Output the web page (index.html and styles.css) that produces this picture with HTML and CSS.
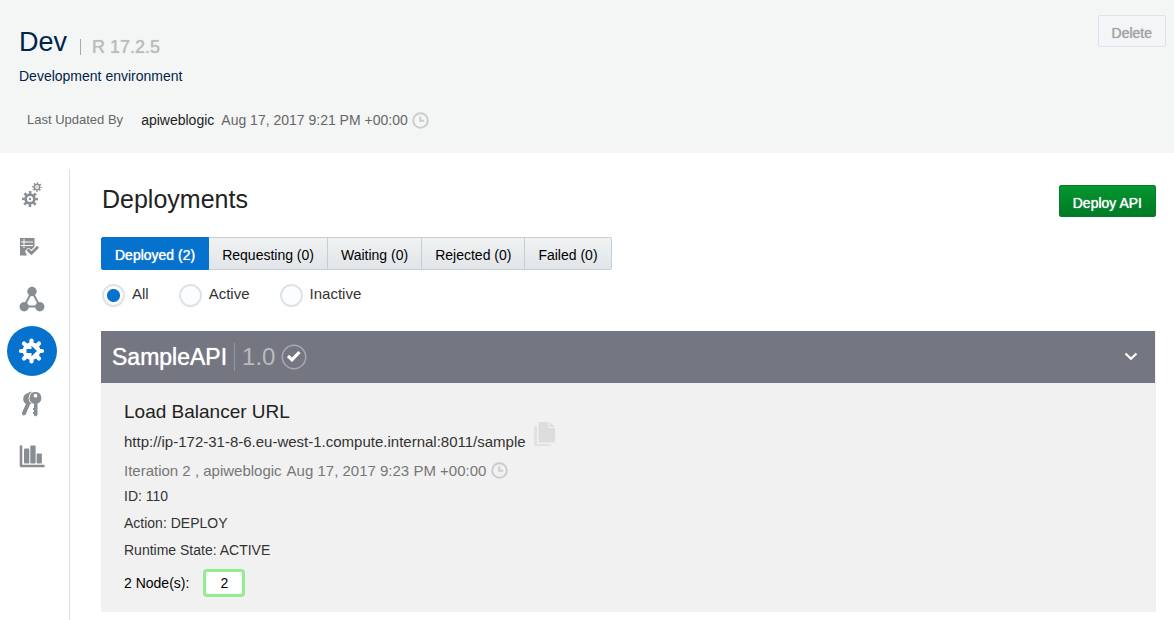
FILE: index.html
```html
<!DOCTYPE html>
<html lang="en">

<head>
    <meta charset="UTF-8">
    <meta name="viewport" content="width=device-width, initial-scale=1.0">
    <title>Dev - Deployments</title>
    <link rel="stylesheet" href="styles.css">
</head>

<body>
    <header class="page-header">
        <div>
            <div class="title-row">
                <h1>Dev</h1>
                <span class="release">R 17.2.5</span>
            </div>
            <p class="description">Development environment</p>
            <div class="updated">
                <span class="updated-label">Last Updated By</span>
                <span class="updated-user">apiweblogic</span>
                <span class="updated-date">Aug 17, 2017 9:21 PM +00:00</span>
                <svg class="clock" viewBox="0 0 17 17"><circle cx="8.5" cy="8.5" r="7.3" /><path d="M8.2 4.5v4.3h4" /></svg>
            </div>
        </div>
        <button class="btn btn-delete" disabled>Delete</button>
    </header>

    <div class="layout">
        <nav class="sidebar">
            <a href="#" aria-label="Settings">
                <svg width="22" height="26" viewBox="0 0 22 26">
                    <g fill="none" stroke="#878d91">
                        <circle cx="9" cy="17" r="4.4" stroke-width="2.8" />
                        <circle cx="9" cy="17" r="6.6" stroke-width="2.8" stroke-dasharray="2.5 2.68" stroke-dashoffset="1.25" />
                        <circle cx="16" cy="5" r="2.6" stroke-width="1.4" />
                        <circle cx="16" cy="5" r="3.9" stroke-width="1.8" stroke-dasharray="1.5 1.56" stroke-dashoffset=".75" />
                    </g>
                    <circle cx="9" cy="17" r="1.2" fill="#878d91" />
                    <circle cx="16" cy="5" r=".7" fill="#878d91" />
                </svg>
            </a>
            <a href="#" aria-label="APIs">
                <svg class="icon-list" width="24" height="20" viewBox="0 0 24 20">
                    <path fill="#878d91" d="M1 1h14.500v9l-3.500 3-3-2-3 3 2 4.500H1z" />
                    <path fill="none" stroke="#fff" d="M2 5h12M2 8.500h12M5 2v9" />
                    <path fill="none" stroke="#fff" stroke-width="5" d="M8 12.500l4 4 7.500-7" />
                    <path fill="none" stroke="#878d91" stroke-width="2.800" d="M8.500 12.500l4 3.800 6.500-6.500" />
                </svg>
            </a>
            <a href="#" aria-label="Topology">
                <svg width="26" height="26" viewBox="0 0 26 26">
                    <path fill="none" stroke="#878d91" stroke-width="2" d="M13 5.500L5 20.500h16z" />
                    <g fill="#878d91">
                        <circle cx="13" cy="5.500" r="4.700" />
                        <circle cx="5.200" cy="20.800" r="4.700" />
                        <circle cx="20.800" cy="20.800" r="4.700" />
                    </g>
                </svg>
            </a>
            <a href="#" class="active" aria-label="Deployments">
                <svg width="28" height="28" viewBox="0 0 28 28">
                    <path stroke="#fff" stroke-width="4.200" stroke-linecap="round" d="M13.500 3.500v21M3 14h21M6 6.500l15 15M21 6.500l-15 15" />
                    <circle cx="13.500" cy="14" r="8.800" fill="#fff" />
                    <path fill="#0572ce" d="M8.500 12h5V8.800l5.500 5.200-5.500 5.200V16h-5z" />
                </svg>
            </a>
            <a href="#" aria-label="Grants">
                <svg class="icon-keys" width="24" height="26" viewBox="0 0 24 26">
                    <path fill="#878d91" d="M8.500 1.500a5.500 5.500 0 0 1 4-.5v11l-2.500 1.500-4.500 10.500-3 .5-.5-3 4-8.500a6 6 0 0 1 2.500-11z" />
                    <circle cx="15.500" cy="7" r="7" fill="#fff" />
                    <path fill="none" stroke="#fff" stroke-width="6" d="M15.500 12v14" />
                    <path fill="#878d91" fill-rule="evenodd" d="M15.500 1a6 6 0 0 1 2 11.600V24l-1.700 1.500L14 24.500v-1.500h-1v-2h1v-2h-1v-2h1v-4.200A6 6 0 0 1 15.500 1zm0 1.800a1.900 1.900 0 1 0 0 3.800a1.900 1.900 0 0 0 0-3.800z" />
                </svg>
            </a>
            <a href="#" aria-label="Analytics">
                <svg class="icon-chart" width="26" height="24" viewBox="0 0 26 24">
                    <path fill="none" stroke="#878d91" stroke-width="2.600" stroke-linecap="round" stroke-linejoin="round" d="M2 2.500v19.500h22.500" />
                    <g fill="#878d91">
                        <rect x="5" y="4.500" width="5.300" height="15" rx="1" />
                        <rect x="11.300" y="1.500" width="5.300" height="18" rx="1" />
                        <rect x="17.600" y="9.500" width="5.300" height="10" rx="1" />
                    </g>
                </svg>
            </a>
        </nav>

        <main class="content">
            <div class="content-head">
                <h2>Deployments</h2>
                <button class="btn btn-deploy">Deploy API</button>
            </div>

            <div class="tabs">
                <button class="tab selected">Deployed (2)</button>
                <button class="tab">Requesting (0)</button>
                <button class="tab">Waiting (0)</button>
                <button class="tab">Rejected (0)</button>
                <button class="tab">Failed (0)</button>
            </div>

            <div class="filters">
                <label><input type="radio" name="state" checked><span>All</span></label>
                <label><input type="radio" name="state"><span>Active</span></label>
                <label><input type="radio" name="state"><span>Inactive</span></label>
            </div>

            <section class="card">
                <div class="card-head">
                    <h3>SampleAPI</h3>
                    <span class="version">1.0</span>
                    <svg width="26" height="26" viewBox="0 0 26 26">
                        <circle cx="13" cy="13" r="11.700" fill="none" stroke="#a8a9b0" stroke-width="1.500" />
                        <path fill="none" stroke="#fff" stroke-width="3.200" d="M7 12l4 3.800 7.500-7.800" />
                    </svg>
                    <button class="collapse" aria-label="Collapse">
                        <svg width="14" height="10" viewBox="0 0 14 10"><path fill="none" stroke="#fff" stroke-width="2.200" d="M1.500 1.500l5.500 5.300L12.500 1.500" /></svg>
                    </button>
                </div>
                <div class="card-body">
                    <h4>Load Balancer URL</h4>
                    <div class="url-row">
                        <span>http://ip-172-31-8-6.eu-west-1.compute.internal:8011/sample</span>
                        <svg width="22" height="26" viewBox="0 0 22 26">
                            <path fill="#e0e2e2" d="M0 5h3v18h14v2H0z" />
                            <path fill="#dcdede" d="M4.500 1h10v6h6.500v14.500H4.500z" />
                            <path fill="#dcdede" d="M15.500 1l5.500 5h-5.500z" />
                        </svg>
                    </div>
                    <div class="iteration">
                        <span>Iteration 2 , apiweblogic</span>
                        <span>Aug 17, 2017 9:23 PM +00:00</span>
                        <svg class="clock" viewBox="0 0 17 17"><circle cx="8.500" cy="8.500" r="7.300" /><path d="M8.200 4.500v4.300h4" /></svg>
                    </div>
                    <p>ID: 110</p>
                    <p>Action: DEPLOY</p>
                    <p>Runtime State: ACTIVE</p>
                    <div class="nodes">
                        <span>2 Node(s):</span>
                        <button class="node-count">2</button>
                    </div>
                </div>
            </section>
        </main>
    </div>
</body>

</html>
```

FILE: styles.css
```css
* {
    box-sizing: border-box;
}

body {
    margin: 0;
    font-family: "Liberation Sans", Arial, sans-serif;
    font-size: 14px;
    color: #333;
    background-color: #fff;
}

h1,
h2,
h3,
h4,
p {
    margin: 0;
    font-weight: normal;
}

button {
    font-family: inherit;
    font-size: 14px;
    cursor: pointer;
}

svg {
    display: block;
    flex-shrink: 0;
}

/* header */
.page-header {
    display: flex;
    justify-content: space-between;
    align-items: flex-start;
    padding: 15px 8px 23px 19px;
    background-color: #f4f6f6;
}

.title-row {
    display: flex;
    align-items: flex-end;
    gap: 13px;
    padding-top: 10px;
}

h1 {
    font-size: 27px;
    line-height: 34px;
    color: #00254a;
}

.release {
    margin-bottom: 4px;
    padding-left: 11px;
    border-left: 1px solid #aaa;
    font-size: 18px;
    line-height: 16px;
    color: #bbb;
    text-shadow: 0 0 1px currentColor;
}

.description {
    margin-top: 8px;
    line-height: 18px;
    color: #00254a;
}

.updated {
    display: flex;
    align-items: center;
    margin-top: 25px;
    padding-left: 8px;
    line-height: 20px;
    color: #666;
}

.updated-label {
    margin-right: 18px;
    font-size: 13px;
}

.updated-user {
    margin-right: 7px;
    color: #222;
}

.clock {
    width: 17px;
    height: 17px;
    margin-left: 4px;
    fill: none;
    stroke: #ccc;
    stroke-width: 2;
}

.btn {
    height: 32px;
    padding: 4px 13px 0;
    border-radius: 2px;
    text-shadow: 0 0 1px currentColor;
}

.btn-delete {
    border: 1px solid #dbe3ee;
    background-color: #f4f5f7;
    color: #a3a3a3;
}

.btn-deploy {
    border: 1px solid #007f2b;
    background: linear-gradient(#05962f, #007a26);
    color: #fff;
}

/* side navigation */
.layout {
    display: flex;
    padding-top: 16px;
}

.sidebar {
    display: flex;
    flex-direction: column;
    width: 70px;
    min-height: 450px;
    padding-left: 7px;
    border-right: 1px solid #d6dfe6;
    flex-shrink: 0;
}

.sidebar a {
    display: flex;
    justify-content: center;
    align-items: center;
    width: 50px;
    height: 50px;
    margin: 1px 0;
    border-radius: 50%;
}

.sidebar .icon-list {
    margin-right: 2px;
}

.sidebar .icon-keys,
.sidebar .icon-chart {
    margin-top: 2px;
}

.sidebar .active {
    background-color: #0572ce;
}

/* deployments */
.content {
    flex: 1;
    padding: 16px 18px 8px 31px;
}

.content-head {
    display: flex;
    justify-content: space-between;
    align-items: flex-start;
}

h2 {
    padding-left: 1px;
    font-size: 25px;
    line-height: 28px;
    color: #222;
}

.tabs {
    display: flex;
    margin-top: 20px;
}

.tab {
    height: 33px;
    padding: 3px 13px 0;
    border: 1px solid #c4ced7;
    border-left-width: 0;
    background: linear-gradient(#f0f2f3, #e1e5e8);
    color: #000;
}

.tab.selected {
    border-color: #0572ce;
    border-left-width: 1px;
    border-radius: 2px 0 0 2px;
    background: #0572ce;
    color: #fff;
    text-shadow: 0 0 1px currentColor;
}

.tab:last-child {
    border-radius: 0 2px 2px 0;
}

.filters {
    display: flex;
    gap: 30px;
    margin-top: 14px;
    padding-left: 1px;
}

.filters label {
    display: flex;
    gap: 7px;
    font-size: 15px;
    line-height: 20px;
}

.filters input {
    appearance: none;
    width: 23px;
    height: 23px;
    margin: 0;
    border: 2px solid #dde3ea;
    border-radius: 50%;
    background-color: #fcfdfe;
}

.filters input:checked {
    background: radial-gradient(circle, #0572ce 6px, #fcfdfe 7px);
}

/* api card */
.card {
    margin-top: 24px;
    background-color: #f1f1f1;
}

.card-head {
    display: flex;
    align-items: center;
    height: 52px;
    margin-right: 1px;
    padding: 0 17px 0 11px;
    background-color: #747681;
}

h3 {
    font-size: 23px;
    line-height: 28px;
    color: #fff;
    text-shadow: 0 0 1px currentColor;
}

.version {
    margin: 0 6px 0 7px;
    padding-left: 7px;
    border-left: 1px solid #96979d;
    font-size: 24px;
    line-height: 28px;
    color: #bbb;
}

.collapse {
    margin-left: auto;
    padding: 0;
    border: 0;
    background: none;
}

.card-body {
    padding: 17px 23px 15px;
}

h4 {
    font-size: 19px;
    line-height: 24px;
    color: #222;
}

.url-row {
    display: flex;
    align-items: center;
    gap: 8px;
    height: 34px;
    font-size: 15px;
}

.url-row svg {
    margin-bottom: 14px;
}

.iteration {
    display: flex;
    align-items: center;
    gap: 5px;
    height: 25px;
    font-size: 15px;
    color: #777;
}

.iteration .clock {
    margin-left: 0;
}

.card-body p {
    line-height: 27px;
}

.nodes {
    display: flex;
    align-items: center;
    gap: 14px;
    margin-top: 5px;
    color: #000;
}

.node-count {
    width: 42px;
    height: 28px;
    padding: 0;
    border: 3px solid #90ee90;
    border-radius: 4px;
    background-color: #fff;
    color: #000;
}
```
